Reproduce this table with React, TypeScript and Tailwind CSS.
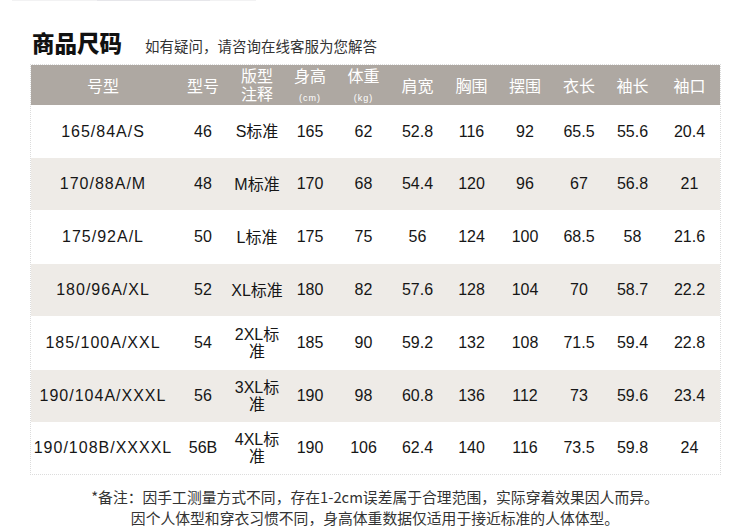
import React from "react";

const rows: { size: string; code: string; note: React.ReactNode; h: string; w: string; vals: string[] }[] = [
  { size: "165/84A/S", code: "46", note: "S标准", h: "165", w: "62", vals: ["52.8", "116", "92", "65.5", "55.6", "20.4"] },
  { size: "170/88A/M", code: "48", note: "M标准", h: "170", w: "68", vals: ["54.4", "120", "96", "67", "56.8", "21"] },
  { size: "175/92A/L", code: "50", note: "L标准", h: "175", w: "75", vals: ["56", "124", "100", "68.5", "58", "21.6"] },
  { size: "180/96A/XL", code: "52", note: "XL标准", h: "180", w: "82", vals: ["57.6", "128", "104", "70", "58.7", "22.2"] },
  { size: "185/100A/XXL", code: "54", note: <>2XL标<br />准</>, h: "185", w: "90", vals: ["59.2", "132", "108", "71.5", "59.4", "22.8"] },
  { size: "190/104A/XXXL", code: "56", note: <>3XL标<br />准</>, h: "190", w: "98", vals: ["60.8", "136", "112", "73", "59.6", "23.4"] },
  { size: "190/108B/XXXXL", code: "56B", note: <>4XL标<br />准</>, h: "190", w: "106", vals: ["62.4", "140", "116", "73.5", "59.8", "24"] },
];

const heights = ["h-[53px]", "h-[52px]", "h-[54px]", "h-[52px]", "h-[54px]", "h-[52px]", "h-[52px]"];

const cols = "grid grid-cols-[144px_56px_52px_54px_53px_55px_53px_54px_54px_53px_61px]";

export default function App() {
  return (
    <div className="w-[750px] h-[526px] bg-white overflow-hidden relative" style={{ fontFamily: '"Noto Sans CJK SC", sans-serif' }}>
      <div className="flex h-px ml-[12px] w-[244px] bg-[#f2f2f3]">
        <div className="ml-[85px] w-[113px] h-px bg-[#e6e6ea]" />
      </div>
      <div className="h-[63px] pt-[26px] pl-[32px] flex items-baseline">
        <span className="text-[22.5px] leading-[30px] font-black text-[#111]">商品尺码</span>
        <span className="ml-[23px] text-[14.5px] leading-[20px] text-[#333]">如有疑问，请咨询在线客服为您解答</span>
      </div>
      <div className="ml-[30px] w-[691px] border border-dotted border-[#dcdcdc]">
        <div className={`${cols} h-[40px] bg-[#aea8a2] text-white text-[16px]`}>
          <div className="flex items-center justify-center leading-[18px]">号型</div>
          <div className="flex items-center justify-center leading-[18px]">型号</div>
          <div className="flex flex-col items-center pt-[1px] leading-[18px]">
            <span>版型</span>
            <span>注释</span>
          </div>
          <div className="flex flex-col items-center pt-[1px]">
            <span className="leading-[18px]">身高</span>
            <span className="mt-[8px] text-[9px] leading-[12px] tracking-[1px]" style={{ fontFamily: '"Liberation Sans", sans-serif' }}>(cm)</span>
          </div>
          <div className="flex flex-col items-center pt-[1px]">
            <span className="leading-[18px]">体重</span>
            <span className="mt-[8px] text-[9px] leading-[12px] tracking-[1px]" style={{ fontFamily: '"Liberation Sans", sans-serif' }}>(kg)</span>
          </div>
          {["肩宽", "胸围", "摆围", "衣长", "袖长", "袖口"].map((t) => (
            <div key={t} className="flex items-center justify-center leading-[18px]">{t}</div>
          ))}
        </div>
        {rows.map((r, i) => (
          <div
            key={i}
            className={`${cols} ${heights[i]} ${i % 2 === 1 ? "bg-[#eeebe7]" : "bg-white"} text-[16px] text-[#161616]`}
            style={{ fontFamily: '"Liberation Sans", "Noto Sans CJK SC", sans-serif' }}
          >
            <div className="flex items-center justify-center tracking-[1px] whitespace-nowrap">{r.size}</div>
            <div className="flex items-center justify-center whitespace-nowrap">{r.code}</div>
            <div className="flex items-center justify-center text-center leading-[17px] whitespace-nowrap">{r.note}</div>
            <div className="flex items-center justify-center">{r.h}</div>
            <div className="flex items-center justify-center">{r.w}</div>
            {r.vals.map((v, j) => (
              <div key={j} className="flex items-center justify-center">{v}</div>
            ))}
          </div>
        ))}
      </div>
      <div className="mt-[11px] flex flex-col items-center text-[14.8px] leading-[21px] text-[#333]">
        <div>*备注：因手工测量方式不同，存在1-2cm误差属于合理范围，实际穿着效果因人而异。</div>
        <div>因个人体型和穿衣习惯不同，身高体重数据仅适用于接近标准的人体体型。</div>
      </div>
    </div>
  );
}
